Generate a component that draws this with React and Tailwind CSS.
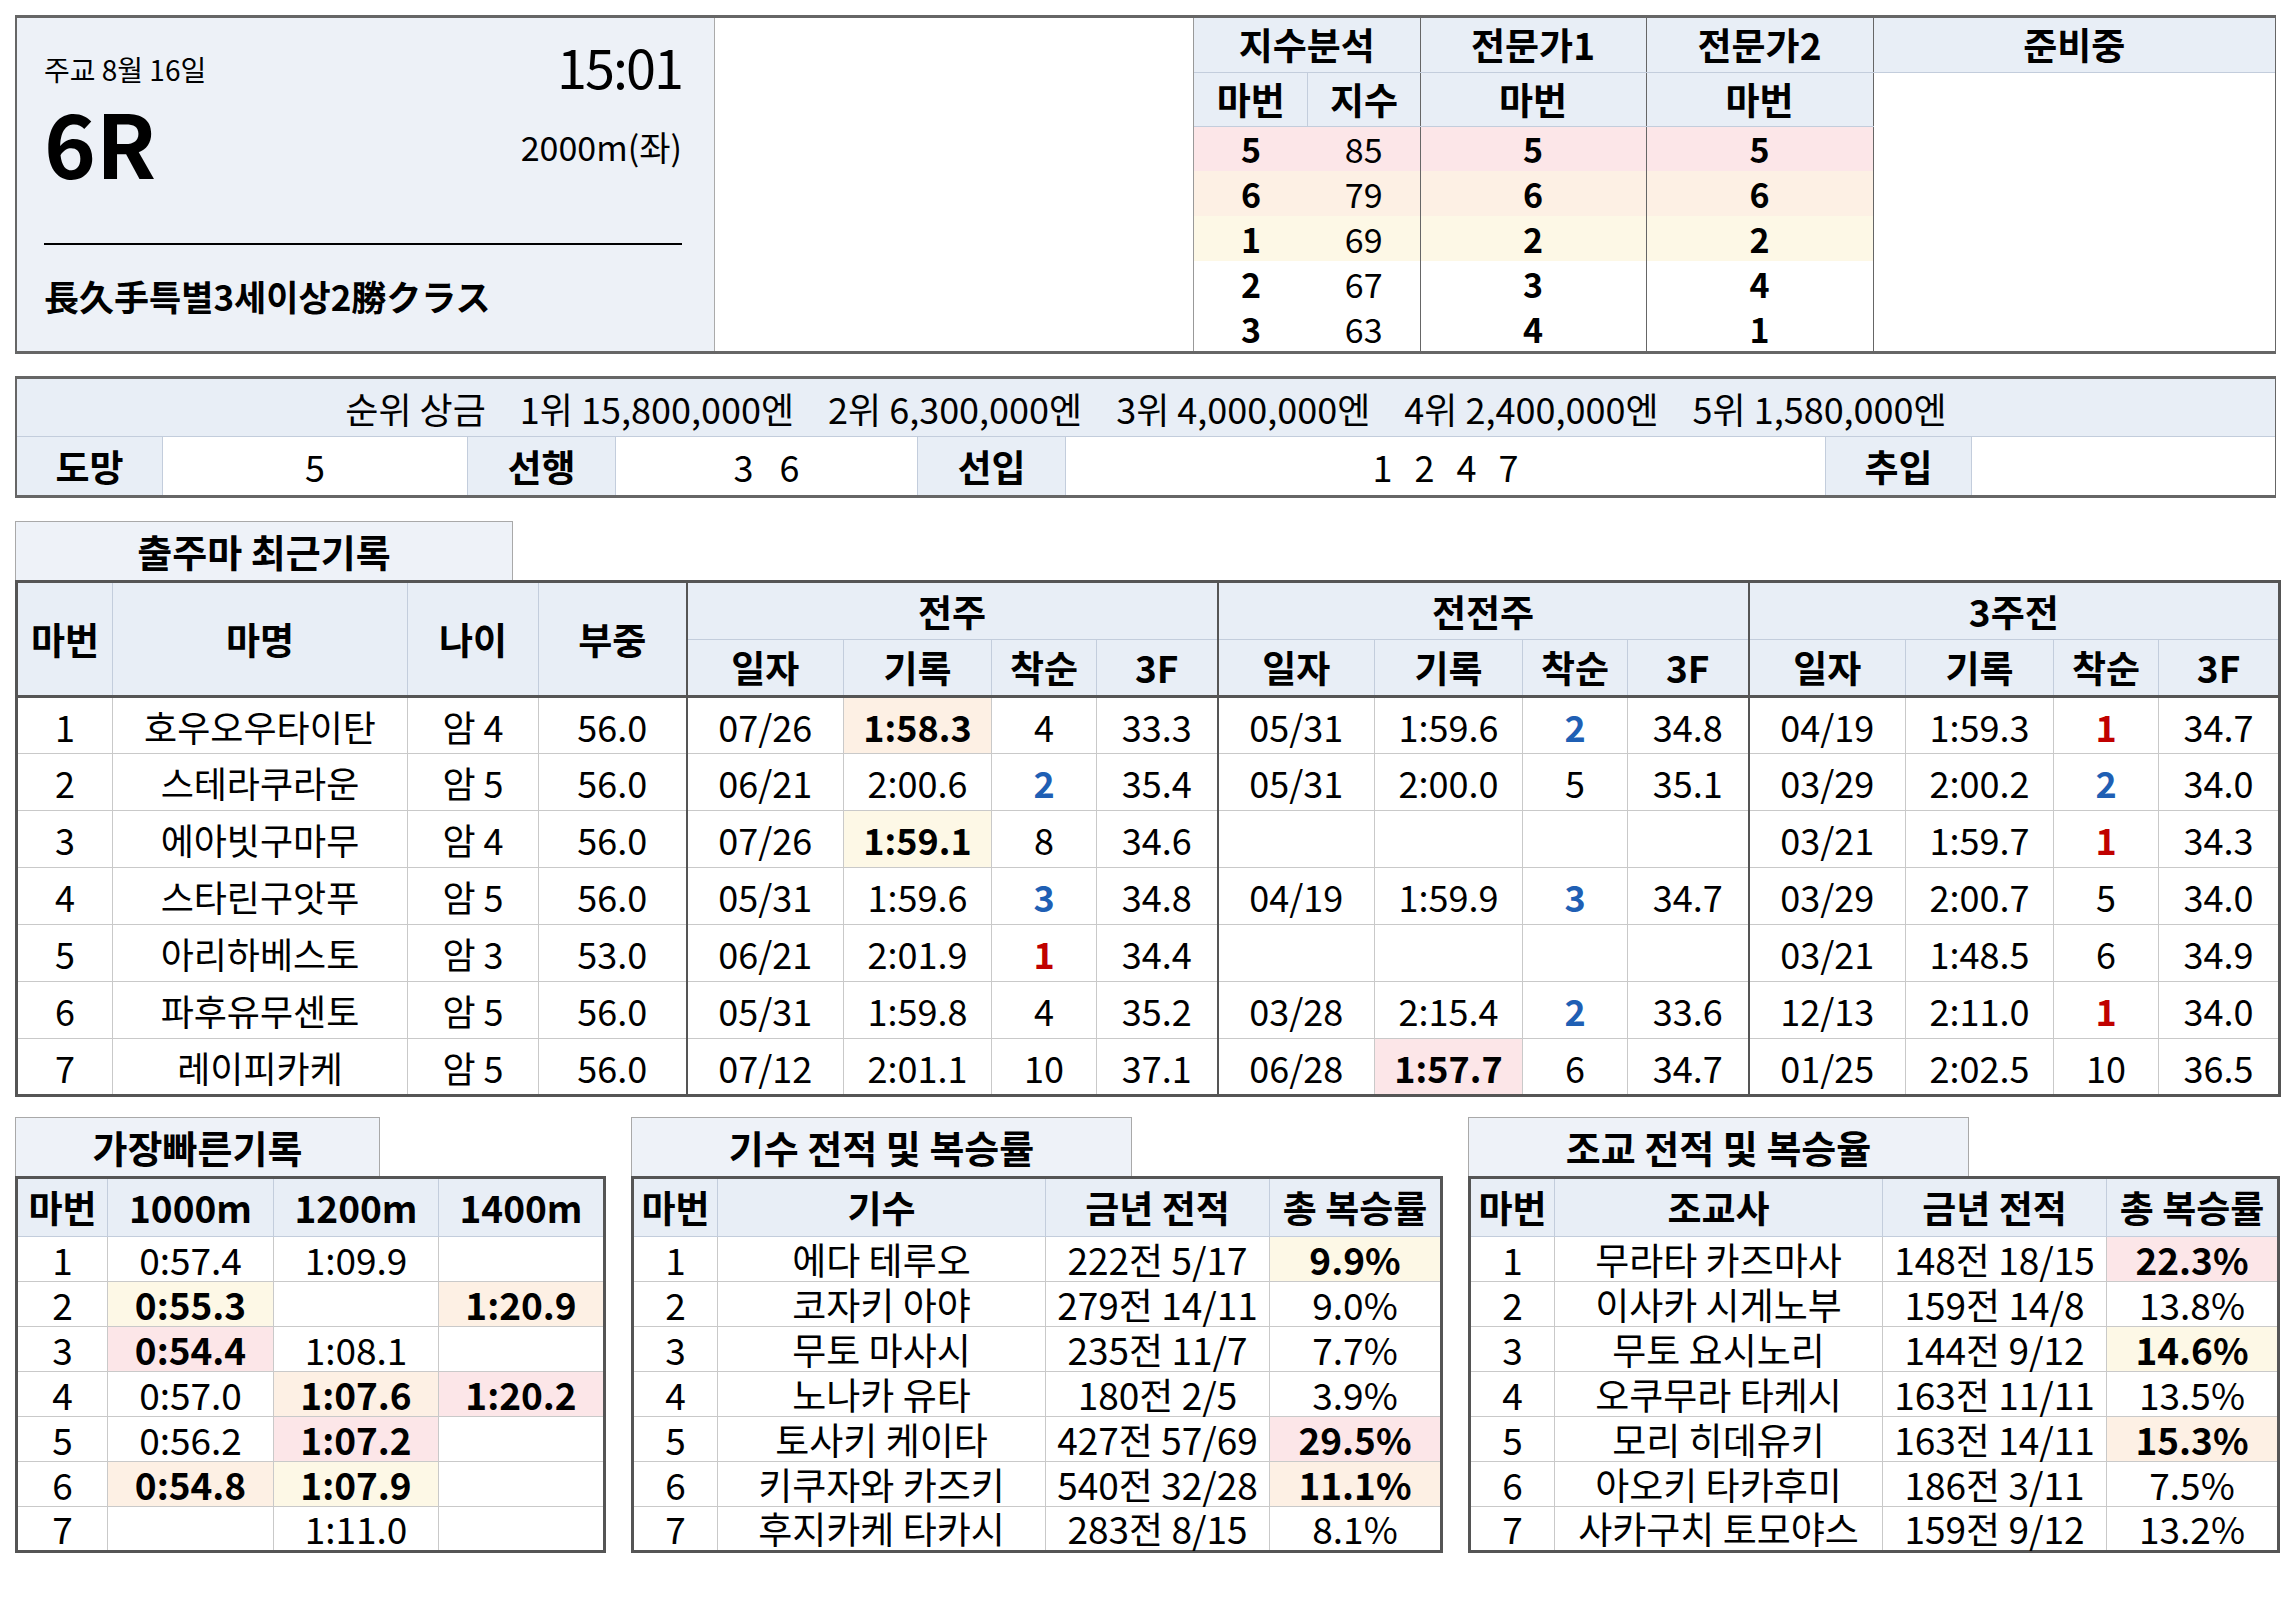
import React from 'react';

const HEAD = 'bg-[#e8eef6]';
const PINK = 'bg-[#fce6e8]';
const ORANGE = 'bg-[#fdf0e4]';
const YELLOW = 'bg-[#fdf8e6]';

const horses = [
  { no: 1, name: '호우오우타이탄', age: '암 4', wt: '56.0', r: [['07/26', '1:58.3', '4', '33.3', ORANGE], ['05/31', '1:59.6', '2', '34.8'], ['04/19', '1:59.3', '1', '34.7']] },
  { no: 2, name: '스테라쿠라운', age: '암 5', wt: '56.0', r: [['06/21', '2:00.6', '2', '35.4'], ['05/31', '2:00.0', '5', '35.1'], ['03/29', '2:00.2', '2', '34.0']] },
  { no: 3, name: '에아빗구마무', age: '암 4', wt: '56.0', r: [['07/26', '1:59.1', '8', '34.6', YELLOW], ['', '', '', ''], ['03/21', '1:59.7', '1', '34.3']] },
  { no: 4, name: '스타린구앗푸', age: '암 5', wt: '56.0', r: [['05/31', '1:59.6', '3', '34.8'], ['04/19', '1:59.9', '3', '34.7'], ['03/29', '2:00.7', '5', '34.0']] },
  { no: 5, name: '아리하베스토', age: '암 3', wt: '53.0', r: [['06/21', '2:01.9', '1', '34.4'], ['', '', '', ''], ['03/21', '1:48.5', '6', '34.9']] },
  { no: 6, name: '파후유무센토', age: '암 5', wt: '56.0', r: [['05/31', '1:59.8', '4', '35.2'], ['03/28', '2:15.4', '2', '33.6'], ['12/13', '2:11.0', '1', '34.0']] },
  { no: 7, name: '레이피카케', age: '암 5', wt: '56.0', r: [['07/12', '2:01.1', '10', '37.1'], ['06/28', '1:57.7', '6', '34.7', PINK], ['01/25', '2:02.5', '10', '36.5']] },
];

const fastest = [
  [['0:57.4'], ['1:09.9'], ['']],
  [['0:55.3', YELLOW], [''], ['1:20.9', ORANGE]],
  [['0:54.4', PINK], ['1:08.1'], ['']],
  [['0:57.0'], ['1:07.6', ORANGE], ['1:20.2', PINK]],
  [['0:56.2'], ['1:07.2', PINK], ['']],
  [['0:54.8', ORANGE], ['1:07.9', YELLOW], ['']],
  [[''], ['1:11.0'], ['']],
];

const jockeys = [
  ['에다 테루오', '222전 5/17', '9.9%', YELLOW],
  ['코자키 아야', '279전 14/11', '9.0%'],
  ['무토 마사시', '235전 11/7', '7.7%'],
  ['노나카 유타', '180전 2/5', '3.9%'],
  ['토사키 케이타', '427전 57/69', '29.5%', PINK],
  ['키쿠자와 카즈키', '540전 32/28', '11.1%', ORANGE],
  ['후지카케 타카시', '283전 8/15', '8.1%'],
];

const trainers = [
  ['무라타 카즈마사', '148전 18/15', '22.3%', PINK],
  ['이사카 시게노부', '159전 14/8', '13.8%'],
  ['무토 요시노리', '144전 9/12', '14.6%', YELLOW],
  ['오쿠무라 타케시', '163전 11/11', '13.5%'],
  ['모리 히데유키', '163전 14/11', '15.3%', ORANGE],
  ['아오키 타카후미', '186전 3/11', '7.5%'],
  ['사카구치 토모야스', '159전 9/12', '13.2%'],
];

const rankClass = (v) => (v === '1' ? 'text-[#c00000] font-bold' : v === '2' || v === '3' ? 'text-[#1f5fb4] font-bold' : '');

const cell = 'border border-[#c9c9c9] text-center leading-none p-0 whitespace-nowrap';
const hcell = 'border border-[#c3cddc] text-center leading-none p-0 font-bold text-[37px] whitespace-nowrap ' + HEAD;

function Tab({ title, w }) {
  return (
    <div className={`${w} h-[59px] flex items-center justify-center bg-[#eef2f8] border border-b-0 border-[#a9a9a9] text-[38px] font-bold leading-none`}>
      {title}
    </div>
  );
}

function StatTable({ title, who, rows }) {
  return (
    <div className="w-[809px]">
      <Tab title={title} w="w-[501px]" />
      <table className="table-fixed border-collapse w-[809px] border-[3px] border-[#555] text-[37px]">
        <colgroup>
          <col className="w-[85px]" />
          <col className="w-[328px]" />
          <col className="w-[224px]" />
          <col className="w-[172px]" />
        </colgroup>
        <thead>
          <tr className="h-[59px]">
            <th className={hcell}>마번</th>
            <th className={hcell}>{who}</th>
            <th className={hcell}>금년 전적</th>
            <th className={hcell}>총 복승률</th>
          </tr>
        </thead>
        <tbody>
          {rows.map((r, i) => (
            <tr key={i} className="h-[45px]">
              <td className={cell}>{i + 1}</td>
              <td className={cell}>{r[0]}</td>
              <td className={cell}>{r[1]}</td>
              <td className={`${cell} ${r[3] ? r[3] + ' font-bold' : ''}`}>{r[2]}</td>
            </tr>
          ))}
        </tbody>
      </table>
    </div>
  );
}

export default function App() {
  const topRows = [
    ['5', '85', '5', '5', PINK],
    ['6', '79', '6', '6', ORANGE],
    ['1', '69', '2', '2', YELLOW],
    ['2', '67', '3', '4'],
    ['3', '63', '4', '1'],
  ];

  return (
    <div className="w-[2291px] min-h-[1600px] bg-white text-black pt-[15px] pl-[15px] font-['Noto_Sans_CJK_KR','Noto_Sans',sans-serif] text-[36px]">
      {/* race header */}
      <div className="w-[2261px] h-[339px] flex border-y-[3px] border-l-2 border-r border-[#666]">
        <div className="w-[698px] bg-[#edf1f7] border-r border-[#aaa] pl-[27px] pr-[32px] pt-[23px] flex flex-col">
          <div className="flex justify-between items-center h-[56px]">
            <span className="text-[28px] leading-none">주교 8월 16일</span>
            <span className="text-[54px] leading-none tracking-[-2px] mb-[6px]">15:01</span>
          </div>
          <div className="flex justify-between items-center h-[100px]">
            <span className="text-[88px] font-bold leading-none mb-[12px]">6R</span>
            <span className="text-[34px] leading-none">2000m(좌)</span>
          </div>
          <div className="mt-[46px] border-t-2 border-black"></div>
          <div className="mt-[33px] text-[35px] font-bold leading-none">長久手특별3세이상2勝クラス</div>
        </div>
        <div className="w-[479px] bg-white border-r border-[#999]"></div>
        <table className="table-fixed border-collapse w-[1081px]">
          <colgroup>
            <col className="w-[114px]" />
            <col className="w-[112px]" />
            <col className="w-[226px]" />
            <col className="w-[227px]" />
            <col className="w-[402px]" />
          </colgroup>
          <tbody>
            <tr className="h-[54px]">
              <td colSpan={2} className={`${hcell} border-t-0 border-l-0 border-r-[#666]`}>지수분석</td>
              <td className={`${hcell} border-t-0 border-r-[#666]`}>전문가1</td>
              <td className={`${hcell} border-t-0 border-r-[#666]`}>전문가2</td>
              <td className={`${hcell} border-t-0 border-r-0`}>준비중</td>
            </tr>
            <tr className="h-[54px]">
              <td className={`${hcell} border-l-0 text-[36px]`}>마번</td>
              <td className={`${hcell} border-r-[#666] text-[36px]`}>지수</td>
              <td className={`${hcell} border-r-[#666] text-[36px]`}>마번</td>
              <td className={`${hcell} border-r-[#666] text-[36px]`}>마번</td>
              <td rowSpan={6} className="bg-white border-0"></td>
            </tr>
            {topRows.map((r, i) => (
              <tr key={i} className={`h-[45px] text-[34px] ${r[4] || 'bg-white'}`}>
                <td className="text-center leading-none font-bold p-0">{r[0]}</td>
                <td className="text-center leading-none p-0 border-r border-[#666]">{r[1]}</td>
                <td className="text-center leading-none font-bold p-0 border-r border-[#666]">{r[2]}</td>
                <td className="text-center leading-none font-bold p-0 border-r border-[#666]">{r[3]}</td>
              </tr>
            ))}
          </tbody>
        </table>
      </div>

      {/* prize + style */}
      <div className="mt-[22px] w-[2261px] border-y-[3px] border-l-2 border-r border-[#666]">
        <div className={`h-[58px] flex items-center justify-center ${HEAD} border-b border-[#c3cddc] gap-[34px] leading-none`}>
          <span>순위 상금</span>
          <span>1위 15,800,000엔</span>
          <span>2위 6,300,000엔</span>
          <span>3위 4,000,000엔</span>
          <span>4위 2,400,000엔</span>
          <span>5위 1,580,000엔</span>
        </div>
        <div className="h-[58px] flex leading-none">
          <div className={`w-[146px] ${HEAD} flex items-center justify-center font-bold text-[37px] border-r border-[#c3cddc]`}>도망</div>
          <div className="w-[305px] flex items-center justify-center border-r border-[#c3cddc]">5</div>
          <div className={`w-[148px] ${HEAD} flex items-center justify-center font-bold text-[37px] border-r border-[#c3cddc]`}>선행</div>
          <div className="w-[302px] flex items-center justify-center gap-[26px] border-r border-[#c3cddc]"><span>3</span><span>6</span></div>
          <div className={`w-[148px] ${HEAD} flex items-center justify-center font-bold text-[37px] border-r border-[#c3cddc]`}>선입</div>
          <div className="w-[760px] flex items-center justify-center gap-[22px] border-r border-[#c3cddc]"><span>1</span><span>2</span><span>4</span><span>7</span></div>
          <div className={`w-[146px] ${HEAD} flex items-center justify-center font-bold text-[37px] border-r border-[#c3cddc]`}>추입</div>
          <div className="flex-1"></div>
        </div>
      </div>

      {/* recent records */}
      <div className="mt-[23px]">
        <Tab title="출주마 최근기록" w="w-[498px]" />
        <table className="table-fixed border-collapse w-[2261px] border-[3px] border-[#555]">
          <colgroup>
            <col className="w-[96px]" />
            <col className="w-[295px]" />
            <col className="w-[131px]" />
            <col className="w-[148px]" />
            {[0, 1, 2].map((g) => (
              <React.Fragment key={g}>
                <col className="w-[157px]" />
                <col className="w-[148px]" />
                <col className="w-[105px]" />
                <col className="w-[121px]" />
              </React.Fragment>
            ))}
          </colgroup>
          <thead>
            <tr className="h-[58px]">
              <th rowSpan={2} className={hcell}>마번</th>
              <th rowSpan={2} className={hcell}>마명</th>
              <th rowSpan={2} className={hcell}>나이</th>
              <th rowSpan={2} className={`${hcell} border-r-2 border-r-[#555]`}>부중</th>
              <th colSpan={4} className={`${hcell} border-r-2 border-r-[#555]`}>전주</th>
              <th colSpan={4} className={`${hcell} border-r-2 border-r-[#555]`}>전전주</th>
              <th colSpan={4} className={hcell}>3주전</th>
            </tr>
            <tr className="h-[57px]">
              {[0, 1, 2].map((g) => (
                <React.Fragment key={g}>
                  <th className={hcell}>일자</th>
                  <th className={hcell}>기록</th>
                  <th className={hcell}>착순</th>
                  <th className={`${hcell} ${g < 2 ? 'border-r-2 border-r-[#555]' : ''}`}>3F</th>
                </React.Fragment>
              ))}
            </tr>
          </thead>
          <tbody className="border-t-[3px] border-[#555]">
            {horses.map((h) => (
              <tr key={h.no} className="h-[57px]">
                <td className={cell}>{h.no}</td>
                <td className={cell}>{h.name}</td>
                <td className={cell}>{h.age}</td>
                <td className={`${cell} border-r-2 border-r-[#555]`}>{h.wt}</td>
                {h.r.map((g, gi) => (
                  <React.Fragment key={gi}>
                    <td className={cell}>{g[0]}</td>
                    <td className={`${cell} ${g[4] ? g[4] + ' font-bold' : ''}`}>{g[1]}</td>
                    <td className={`${cell} ${rankClass(g[2])}`}>{g[2]}</td>
                    <td className={`${cell} ${gi < 2 ? 'border-r-2 border-r-[#555]' : ''}`}>{g[3]}</td>
                  </React.Fragment>
                ))}
              </tr>
            ))}
          </tbody>
        </table>
      </div>

      {/* bottom tables */}
      <div className="mt-[20px] flex gap-[28px] items-start">
        <div className="w-[588px]">
          <Tab title="가장빠른기록" w="w-[365px]" />
          <table className="table-fixed border-collapse w-[588px] border-[3px] border-[#555] text-[37px]">
            <colgroup>
              <col className="w-[91px]" />
              <col className="w-[166px]" />
              <col className="w-[165px]" />
              <col className="w-[166px]" />
            </colgroup>
            <thead>
              <tr className="h-[59px]">
                <th className={hcell}>마번</th>
                <th className={hcell}>1000m</th>
                <th className={hcell}>1200m</th>
                <th className={hcell}>1400m</th>
              </tr>
            </thead>
            <tbody>
              {fastest.map((r, i) => (
                <tr key={i} className="h-[45px]">
                  <td className={cell}>{i + 1}</td>
                  {r.map((c, ci) => (
                    <td key={ci} className={`${cell} ${c[1] ? c[1] + ' font-bold' : ''}`}>{c[0]}</td>
                  ))}
                </tr>
              ))}
            </tbody>
          </table>
        </div>
        <StatTable title="기수 전적 및 복승률" who="기수" rows={jockeys} />
        <StatTable title="조교 전적 및 복승율" who="조교사" rows={trainers} />
      </div>
    </div>
  );
}
